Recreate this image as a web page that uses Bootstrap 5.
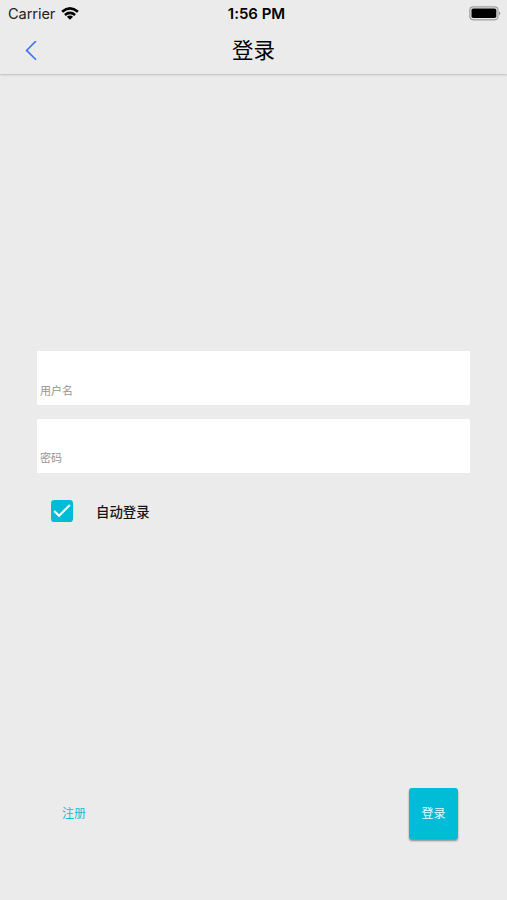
<!DOCTYPE html>
<html lang="zh-CN">
<head>
<meta charset="utf-8">
<meta name="viewport" content="width=device-width, initial-scale=1">
<title>登录</title>
<link href="https://cdn.jsdelivr.net/npm/bootstrap@5.3.0/dist/css/bootstrap.min.css" rel="stylesheet">
<style>
body{background:#ebebeb;color:#000;font-family:Inter,"Noto Sans CJK SC",sans-serif;height:900px;overflow:hidden}
svg{display:block}
.app-head{height:74px;box-shadow:0 1px 2px rgba(0,0,0,.2)}
.status-bar{height:27px;padding:0 6px 0 8px;display:grid;grid-template-columns:1fr auto 1fr}
.carrier{font-size:14.6px;line-height:25px;padding-top:2px;color:#222;letter-spacing:-.08px}
.wifi{margin-left:6px}
.clock{font-size:15px;font-weight:600;line-height:27px;padding-left:4px;letter-spacing:-.02px}
.title-bar{height:47px;display:grid;grid-template-columns:1fr auto 1fr}
.page-title{font-size:21.5px;line-height:47px;font-weight:400}
.login-form{padding:277px 37px 0}
.field{height:54px;border:0;border-radius:1px;padding:25px 3px 0;font-size:11px;background:#fff!important;box-shadow:none!important}
.field + .field{margin-top:13.5px}
.field::placeholder{color:#949494;opacity:1}
.auto-row{margin:26px 0 0 14px;gap:23px;font-size:13.4px;line-height:23px;font-weight:500;color:#151515}
.auto-text{padding-top:2px}
.tick{width:22px;height:22px;margin:0!important;border:0;border-radius:2px;background-color:#00bcd7!important;box-shadow:none!important;background-image:none!important}
.tick-wrap svg{position:absolute;left:0;top:0;pointer-events:none}
.actions{padding:0 49px 61px 50px}
.btn-reg{color:#1bbccf!important;font-size:12px;padding:4px 12px;line-height:18px;border:0}
.btn-login{width:49px;height:51px;padding:1px 0 0;border:0;border-radius:3px;background:#00bcd7!important;color:#e4fbff!important;font-size:12px;box-shadow:0 2px 2px rgba(0,0,0,.42)}
</style>
</head>
<body class="d-flex flex-column">
<header class="app-head">
  <div class="status-bar align-items-center">
    <div class="d-flex align-items-center">
      <span class="carrier">Carrier</span>
      <svg class="wifi" width="18" height="13" viewBox="0 0 18 13" fill="none" stroke="#000" stroke-width="2.6"><path d="M1.1 4.7Q9-1.9 16.9 4.7M3.9 7.9Q9 3.7 14.1 7.9"/><path d="M9 12.8 5.9 9.8Q9 7.4 12.1 9.8Z" fill="#000" stroke="none"/></svg>
    </div>
    <span class="clock">1:56 PM</span>
    <svg class="ms-auto" width="32" height="15" viewBox="0 0 32 15"><rect x=".8" y=".8" width="28.2" height="13" rx="3.5" fill="#e4e4e4" stroke="#a0a0a0" stroke-width="1.2"/><rect x="2.5" y="2.5" width="24.8" height="9.6" rx="1.8"/><path d="M30 5.2q2.2 2.1 0 4.2z" fill="#888"/></svg>
  </div>
  <div class="title-bar align-items-center">
    <a href="#" aria-label="返回" class="ps-4"><svg width="14" height="20" viewBox="0 0 14 20" fill="none" stroke="#3f70e4" stroke-width="1.6"><path d="M12 0 2.6 9.4 12 18.8"/></svg></a>
    <h1 class="page-title m-0">登录</h1>
  </div>
</header>
<main class="flex-grow-1 d-flex flex-column">
  <form class="login-form">
    <input class="form-control field" type="text" placeholder="用户名" aria-label="用户名">
    <input class="form-control field" type="password" placeholder="密码" aria-label="密码">
    <label class="auto-row d-flex align-items-center">
      <span class="tick-wrap position-relative"><input class="form-check-input tick d-block" type="checkbox" checked><svg width="22" height="22" viewBox="0 0 22 22" fill="none" stroke="#fff" stroke-width="2.1"><path d="M3.2 10.9 8.1 15.8 18.8 4.9"/></svg></span>
      <span class="auto-text">自动登录</span>
    </label>
  </form>
  <div class="actions d-flex justify-content-between align-items-center mt-auto">
    <button type="button" class="btn btn-link text-decoration-none btn-reg">注册</button>
    <button type="button" class="btn btn-login">登录</button>
  </div>
</main>
<script src="https://cdn.jsdelivr.net/npm/bootstrap@5.3.0/dist/js/bootstrap.bundle.min.js"></script>
</body>
</html>
